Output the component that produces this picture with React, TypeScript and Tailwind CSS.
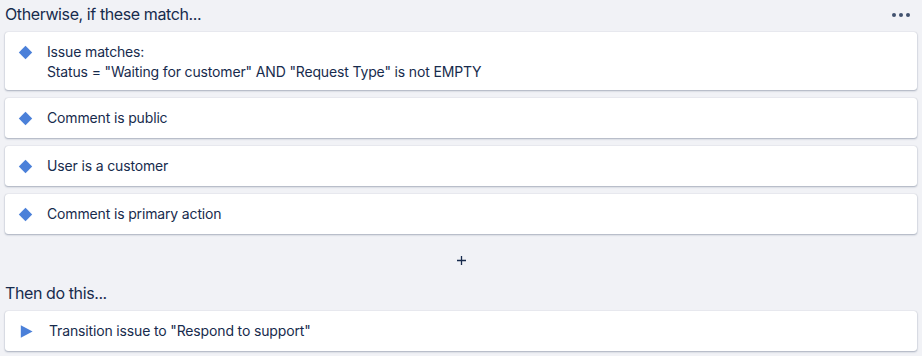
const conditions: string[][] = [
  ["Issue matches:", 'Status = "Waiting for customer" AND "Request Type" is not EMPTY'],
  ["Comment is public"],
  ["User is a customer"],
  ["Comment is primary action"],
];

function Diamond() {
  return (
    <svg width="15" height="15" viewBox="0 0 15 15" className="shrink-0">
      <path d="M7.5 0.8 L14.2 7.5 L7.5 14.2 L0.8 7.5 Z" fill="#4b80d9" />
    </svg>
  );
}

function Play() {
  return (
    <svg width="13" height="13" viewBox="0 0 13 13" className="shrink-0">
      <path d="M0.8 0.3 L12.6 6.5 L0.8 12.7 Z" fill="#4b80d9" />
    </svg>
  );
}

function Card({ lines }: { lines: string[] }) {
  const multi = lines.length > 1;
  return (
    <div
      className={`flex items-start bg-white rounded-[3px] shadow-[0_1px_2px_rgba(9,30,66,0.3),0_0_1px_rgba(9,30,66,0.25)] pl-[13px] ${
        multi ? "pt-[10px] pb-[8px]" : "py-[10px]"
      }`}
    >
      <div className="h-5 flex items-center">
        <Diamond />
      </div>
      <div className="ml-[14px] text-[14px] leading-5 tracking-[-0.15px] text-[#172b4d]">
        {lines.map((l) => (
          <div key={l}>{l}</div>
        ))}
      </div>
    </div>
  );
}

export default function App() {
  return (
    <div
      className="w-[922px] h-[356px] bg-[#f1f2f6] px-[5px] pt-[4px] overflow-hidden"
      style={{ fontFamily: "Inter, 'Noto Sans', sans-serif" }}
    >
      <div className="flex items-center justify-between h-5 mb-[8px]">
        <div className="text-[16px] leading-5 tracking-[-0.4px] text-[#172b4d]">Otherwise, if these match...</div>
        <div className="flex gap-[2.5px] mr-[7px] mt-[2px]">
          <span className="w-[4.5px] h-[4.5px] rounded-full bg-[#42526e]" />
          <span className="w-[4.5px] h-[4.5px] rounded-full bg-[#42526e]" />
          <span className="w-[4.5px] h-[4.5px] rounded-full bg-[#42526e]" />
        </div>
      </div>
      <div className="flex flex-col gap-[8px]">
        {conditions.map((c) => (
          <Card key={c[0]} lines={c} />
        ))}
      </div>
      <div className="h-[49px] flex items-center justify-center pt-[3px]">
        <svg width="9" height="9" viewBox="0 0 9 9">
          <path d="M4.5 0 V9 M0 4.5 H9" stroke="#172b4d" strokeWidth="1.3" />
        </svg>
      </div>
      <div className="text-[16px] leading-5 tracking-[-0.4px] text-[#172b4d] mb-[8px]">Then do this...</div>
      <div className="flex items-center bg-white rounded-[3px] shadow-[0_1px_2px_rgba(9,30,66,0.3),0_0_1px_rgba(9,30,66,0.25)] pl-[15px] py-[10px]">
        <Play />
        <div className="ml-[16px] text-[14px] leading-5 tracking-[-0.15px] text-[#172b4d]">
          Transition issue to "Respond to support"
        </div>
      </div>
    </div>
  );
}
